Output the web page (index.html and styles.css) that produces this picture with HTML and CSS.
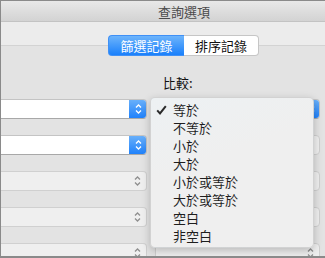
FILE: index.html
```html
<!DOCTYPE html>
<html lang="zh-Hant">
<head>
    <meta charset="UTF-8">
    <title>查詢選項</title>
    <link rel="stylesheet" href="styles.css">
</head>
<body>
<div class="window">
    <div class="titlebar">查詢選項</div>
    <div class="toolbar"></div>
    <div class="box">
        <div class="tabs">
            <span class="seg active">篩選記錄</span>
            <span class="seg">排序記錄</span>
        </div>
        <div class="rows">
            <span></span>
            <span class="label">比較:</span>

            <div class="select on"><span class="stepper"><svg width="7" height="12" viewBox="0 0 7 12"><path d="M1 4.5L3.5 2L6 4.5M1 7.5L3.5 10L6 7.5"/></svg></span></div>
            <div class="select on"><span class="stepper"><svg width="7" height="12" viewBox="0 0 7 12"><path d="M1 4.5L3.5 2L6 4.5M1 7.5L3.5 10L6 7.5"/></svg></span></div>

            <div class="select on"><span class="stepper"><svg width="7" height="12" viewBox="0 0 7 12"><path d="M1 4.5L3.5 2L6 4.5M1 7.5L3.5 10L6 7.5"/></svg></span></div>
            <div class="select off"><span class="stepper"><svg width="7" height="12" viewBox="0 0 7 12"><path d="M1 4.5L3.5 2L6 4.5M1 7.5L3.5 10L6 7.5"/></svg></span></div>

            <div class="select off"><span class="stepper"><svg width="7" height="12" viewBox="0 0 7 12"><path d="M1 4.5L3.5 2L6 4.5M1 7.5L3.5 10L6 7.5"/></svg></span></div>
            <div class="select off"><span class="stepper"><svg width="7" height="12" viewBox="0 0 7 12"><path d="M1 4.5L3.5 2L6 4.5M1 7.5L3.5 10L6 7.5"/></svg></span></div>

            <div class="select off"><span class="stepper"><svg width="7" height="12" viewBox="0 0 7 12"><path d="M1 4.5L3.5 2L6 4.5M1 7.5L3.5 10L6 7.5"/></svg></span></div>
            <div class="select off"><span class="stepper"><svg width="7" height="12" viewBox="0 0 7 12"><path d="M1 4.5L3.5 2L6 4.5M1 7.5L3.5 10L6 7.5"/></svg></span></div>

            <div class="select off"><span class="stepper"><svg width="7" height="12" viewBox="0 0 7 12"><path d="M1 4.5L3.5 2L6 4.5M1 7.5L3.5 10L6 7.5"/></svg></span></div>
            <div class="select off"><span class="stepper"><svg width="7" height="12" viewBox="0 0 7 12"><path d="M1 4.5L3.5 2L6 4.5M1 7.5L3.5 10L6 7.5"/></svg></span></div>
        </div>
    </div>

    <ul class="menu">
        <li class="checked"><svg class="check" width="11" height="10" viewBox="0 0 11 10"><path d="M1.2 5.4L4 8.4L9.8 1.2"/></svg>等於</li>
        <li>不等於</li>
        <li>小於</li>
        <li>大於</li>
        <li>小於或等於</li>
        <li>大於或等於</li>
        <li>空白</li>
        <li>非空白</li>
    </ul>
</div>
</body>
</html>
```
FILE: styles.css
```css
* { box-sizing: border-box; }
html, body { margin: 0; padding: 0; }
body { width: 325px; height: 258px; overflow: hidden; background: #e3e3e3; font-family: "Noto Sans CJK TC", "Noto Sans", sans-serif; font-size: 13px; color: #222; }

/* the window is wider than the shot; its middle sits at x=184 */
.window { position: relative; width: 325px; height: 258px; border: 1px solid #8a8a8a; border-right: 0; border-bottom-width: 2px; background: #e3e3e3; overflow: hidden; }

.titlebar { height: 21px; padding: 2px 0 0 42px; line-height: 18px; text-align: center; color: #4b4b4b; background: linear-gradient(#e8e8e8, #d3d3d3); border-bottom: 1px solid #c3c3c3; }
.toolbar { height: 23px; background: #ececec; }

.box { border-top: 1px solid #d3d3d3; }

.tabs { display: flex; justify-content: center; margin-top: -11px; padding-left: 41px; }
.seg { width: 75px; height: 21px; line-height: 19px; text-align: center; background: #fff; color: #111; border: 1px solid #c6c6c6; border-left: 0; border-radius: 0 4px 4px 0; }
.seg.active { width: 76px; color: #fff; background: linear-gradient(#6db4fb, #1a80fb); border: 1px solid #3f90f6; border-right: 0; border-radius: 4px 0 0 4px; }

.rows { display: grid; grid-template-columns: 146px 165px; column-gap: 8px; row-gap: 16px; margin-top: 18px; }
.label { padding-left: 8px; line-height: 17px; margin-bottom: -8px; color: #111; }

.select { height: 20px; display: flex; justify-content: flex-end; background: #fff; border: 1px solid #c4c4c4; border-bottom-color: #a8a8a8; border-radius: 4px; overflow: hidden; }
/* left column runs on past the left edge */
.select:nth-child(odd) { border-left: 0; border-radius: 0 4px 4px 0; }
.stepper { width: 17px; display: flex; align-items: center; justify-content: center; color: #fff; }
.stepper svg path { fill: none; stroke: currentColor; stroke-width: 1.3; }
.select.on .stepper { margin: -1px -1px -1px 0; width: 18px; background: linear-gradient(#6cb2fa, #1c7ffb); }
.select.off { background: #efefef; border-color: #d0d0d0; }
.select.off .stepper { color: #8f8f8f; }

.menu { position: absolute; left: 149px; top: 96px; width: 164px; height: 151px; margin: 0; padding: 3px 0 4px; list-style: none; background: linear-gradient(160deg, #edf1f3, #efefef 40%); border: 1px solid rgba(0, 0, 0, 0.12); border-radius: 5px; box-shadow: 0 3px 9px rgba(0, 0, 0, 0.22); }
.menu li { position: relative; height: 18px; line-height: 18px; padding-left: 22px; color: #1e1e1e; }
.check { position: absolute; left: 5px; top: 4px; }
.check path { fill: none; stroke: #2a2a2a; stroke-width: 2; }
```
